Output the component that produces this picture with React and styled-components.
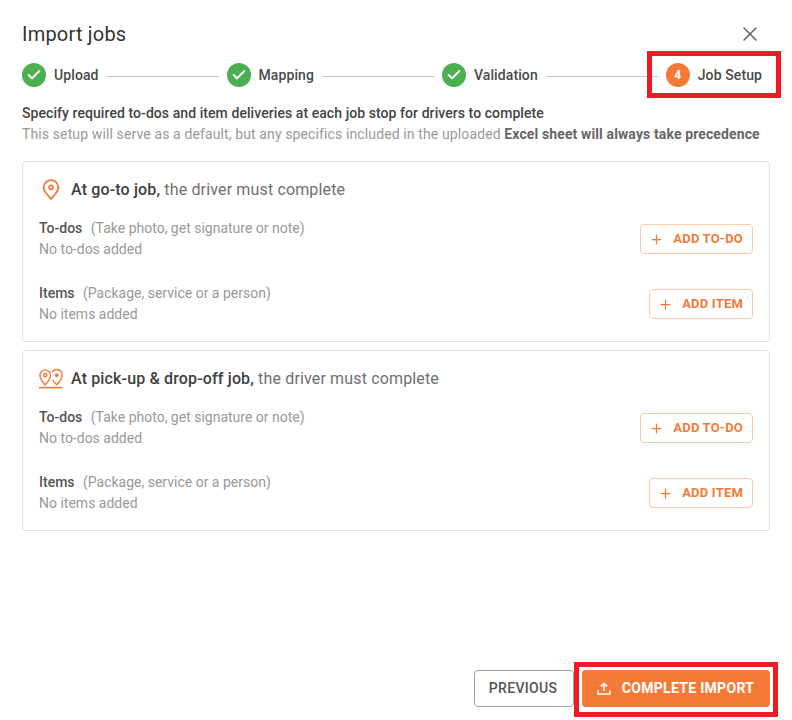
import React from "react";
import styled, { createGlobalStyle } from "styled-components";
import { Check, Plus, X } from "lucide-react";

const GlobalStyle = createGlobalStyle`
  html, body {
    margin: 0;
    padding: 0;
    background: #fff;
  }
  body {
    font-family: Roboto, "Liberation Sans", sans-serif;
    color: #3f3f3f;
  }
  * {
    box-sizing: border-box;
  }
`;

const orange = "#f47a38";

const Page = styled.div`
  position: relative;
  display: flex;
  flex-direction: column;
  width: 792px;
  height: 720px;
  padding: 22px 22px 13px;
  overflow: hidden;
`;

const Header = styled.div`
  display: flex;
  align-items: center;
  justify-content: space-between;
  height: 24px;
`;

const Title = styled.h1`
  margin: 0;
  font-size: 20px;
  line-height: 24px;
  font-weight: 400;
  color: #333;
  letter-spacing: 0.2px;
`;

const CloseButton = styled.button`
  display: flex;
  padding: 0;
  margin-right: 8px;
  border: 0;
  background: none;
  color: #666;
`;

const Stepper = styled.div`
  display: flex;
  align-items: center;
  gap: 8px;
  width: 740px;
  height: 24px;
  margin-top: 17px;
`;

const Step = styled.div`
  position: relative;
  display: flex;
  align-items: center;
  gap: 8px;
`;

const StepCircle = styled.span`
  display: flex;
  align-items: center;
  justify-content: center;
  width: 24px;
  height: 24px;
  border-radius: 50%;
  background: ${(p) => (p.$active ? orange : "#4caf50")};
  color: #fff;
  font-size: 12px;
  font-weight: 700;
`;

const StepLabel = styled.span`
  font-size: 14px;
  line-height: 20px;
  font-weight: 500;
  color: #4a4a4a;
  letter-spacing: 0.1px;
`;

const StepLine = styled.span`
  flex: 1;
  height: 1px;
  background: #c6c6c6;
  margin-top: 2px;
`;

const Highlight = styled.span`
  position: absolute;
  border: 5px solid #ed1c24;
  pointer-events: none;
  ${(p) => p.$inset}
`;

const Intro = styled.div`
  margin-top: 16px;
  font-size: 14px;
  line-height: 21px;
  color: #999;
  letter-spacing: 0.12px;
`;

const IntroLead = styled.div`
  font-weight: 500;
  color: #444;
  letter-spacing: 0.07px;
`;

const IntroStrong = styled.span`
  font-weight: 700;
  color: #666;
`;

const Cards = styled.div`
  display: flex;
  flex-direction: column;
  gap: 8px;
  margin-top: 16px;
`;

const Card = styled.section`
  height: 181px;
  padding: 16px 16px 0;
  border: 1px solid #e0e0e0;
  border-radius: 4px;
`;

const CardTitle = styled.div`
  display: flex;
  align-items: center;
  gap: 8px;
  height: 24px;
  padding-bottom: 2px;
  font-size: 16px;
  color: #6f6f6f;
  letter-spacing: 0.15px;

  strong {
    font-weight: 500;
    color: #3f3f3f;
  }
`;

const IconSlot = styled.span`
  display: flex;
  justify-content: center;
  width: 24px;
`;

const Row = styled.div`
  display: flex;
  align-items: center;
  justify-content: space-between;
  height: 42px;
  margin-top: ${(p) => p.$gap}px;
`;

const RowText = styled.div`
  font-size: 14px;
  line-height: 21px;
  color: #999;
`;

const RowName = styled.span`
  font-weight: 500;
  color: #555;
  margin-right: 5px;
`;

const AddButton = styled.button`
  display: flex;
  align-items: center;
  height: 30px;
  padding: 0 9px 2px 8px;
  border: 1px solid #fbc9ae;
  border-radius: 4px;
  background: #fff;
  color: ${orange};
  font-family: inherit;
  font-size: 13px;
  font-weight: 700;
  letter-spacing: 0.2px;

  svg {
    margin-top: 2px;
    margin-right: 9px;
  }
`;

const Footer = styled.div`
  display: flex;
  justify-content: flex-end;
  gap: 8px;
  margin-top: auto;
`;

const FooterButton = styled.button`
  position: relative;
  display: flex;
  align-items: center;
  justify-content: center;
  gap: 10px;
  width: ${(p) => p.$width}px;
  height: 37px;
  padding: 0 2px 2px 0;
  border: ${(p) => (p.$primary ? "0" : "1px solid #a0a0a0")};
  border-radius: 4px;
  background: ${(p) => (p.$primary ? orange : "#fff")};
  color: ${(p) => (p.$primary ? "#fff" : "#555")};
  font-family: inherit;
  font-size: 14px;
  font-weight: ${(p) => (p.$primary ? 700 : 500)};
  letter-spacing: 0.3px;
`;

const PinIcon = () => (
  <svg width="18" height="21" viewBox="0 0 18 21" fill="none" stroke={orange} strokeWidth="1.8">
    <path d="M9 20C5 15.8 1.6 12.4 1.6 8.6a7.4 7.4 0 0 1 14.8 0C16.4 12.4 13 15.8 9 20z" strokeLinejoin="round" />
    <circle cx="9" cy="8.4" r="2" />
  </svg>
);

const DoublePinIcon = () => (
  <svg width="25" height="21" viewBox="0 0 25 21" fill="none" stroke={orange} strokeWidth="1.5">
    <path d="M6.5 17.2C3.6 14 1 11.2 1 7a5.5 5.5 0 0 1 11 0c0 4.2-2.6 7-5.5 10.2z" strokeLinejoin="round" />
    <circle cx="6.5" cy="7" r="1.7" />
    <path d="M18.5 17.2c-1.6-1.8-3.2-3.4-4.3-5.4M13.6 4.2A5.5 5.5 0 0 1 24 7c0 4.2-2.6 7-5.5 10.2" strokeLinejoin="round" />
    <circle cx="18.5" cy="7" r="1.2" fill={orange} />
    <path d="M0 20h24.5" strokeWidth="1.6" />
  </svg>
);

const UploadIcon = () => (
  <svg width="16" height="16" viewBox="0 0 16 16" fill="none" stroke="#fff" strokeWidth="1.6">
    <path d="M8 11V3.5M4.9 6.4 8 3.3l3.1 3.1M2 10.5V14h12v-3.5" />
  </svg>
);

const steps = ["Upload", "Mapping", "Validation"];

const JobCard = ({ icon, lead, rest }) => (
  <Card>
    <CardTitle>
      <IconSlot>{icon}</IconSlot>
      <span>
        <strong>{lead}</strong> {rest}
      </span>
    </CardTitle>
    <Row $gap={16}>
      <RowText>
        <div>
          <RowName>To-dos</RowName> (Take photo, get signature or note)
        </div>
        <div>No to-dos added</div>
      </RowText>
      <AddButton>
        <Plus size={15} strokeWidth={2} />
        ADD TO-DO
      </AddButton>
    </Row>
    <Row $gap={23}>
      <RowText>
        <div>
          <RowName>Items</RowName> (Package, service or a person)
        </div>
        <div>No items added</div>
      </RowText>
      <AddButton>
        <Plus size={15} strokeWidth={2} />
        ADD ITEM
      </AddButton>
    </Row>
  </Card>
);

export default function App() {
  return (
    <Page>
      <GlobalStyle />
      <Header>
        <Title>Import jobs</Title>
        <CloseButton aria-label="Close">
          <X size={24} strokeWidth={1.6} />
        </CloseButton>
      </Header>

      <Stepper>
        {steps.map((name) => (
          <React.Fragment key={name}>
            <Step>
              <StepCircle>
                <Check size={16} strokeWidth={3} />
              </StepCircle>
              <StepLabel>{name}</StepLabel>
            </Step>
            <StepLine />
          </React.Fragment>
        ))}
        <Step>
          <StepCircle $active>4</StepCircle>
          <StepLabel>Job Setup</StepLabel>
          <Highlight $inset="left: -19px; top: -12px; width: 134px; height: 47px;" />
        </Step>
      </Stepper>

      <Intro>
        <IntroLead>Specify required to-dos and item deliveries at each job stop for drivers to complete</IntroLead>
        <div>
          This setup will serve as a default, but any specifics included in the uploaded{" "}
          <IntroStrong>Excel sheet will always take precedence</IntroStrong>
        </div>
      </Intro>

      <Cards>
        <JobCard icon={<PinIcon />} lead="At go-to job," rest="the driver must complete" />
        <JobCard icon={<DoublePinIcon />} lead="At pick-up & drop-off job," rest="the driver must complete" />
      </Cards>

      <Footer>
        <FooterButton $width={100}>PREVIOUS</FooterButton>
        <FooterButton $primary $width={188}>
          <UploadIcon />
          COMPLETE IMPORT
          <Highlight $inset="left: -8px; top: -8px; width: 204px; height: 55px;" />
        </FooterButton>
      </Footer>
    </Page>
  );
}
